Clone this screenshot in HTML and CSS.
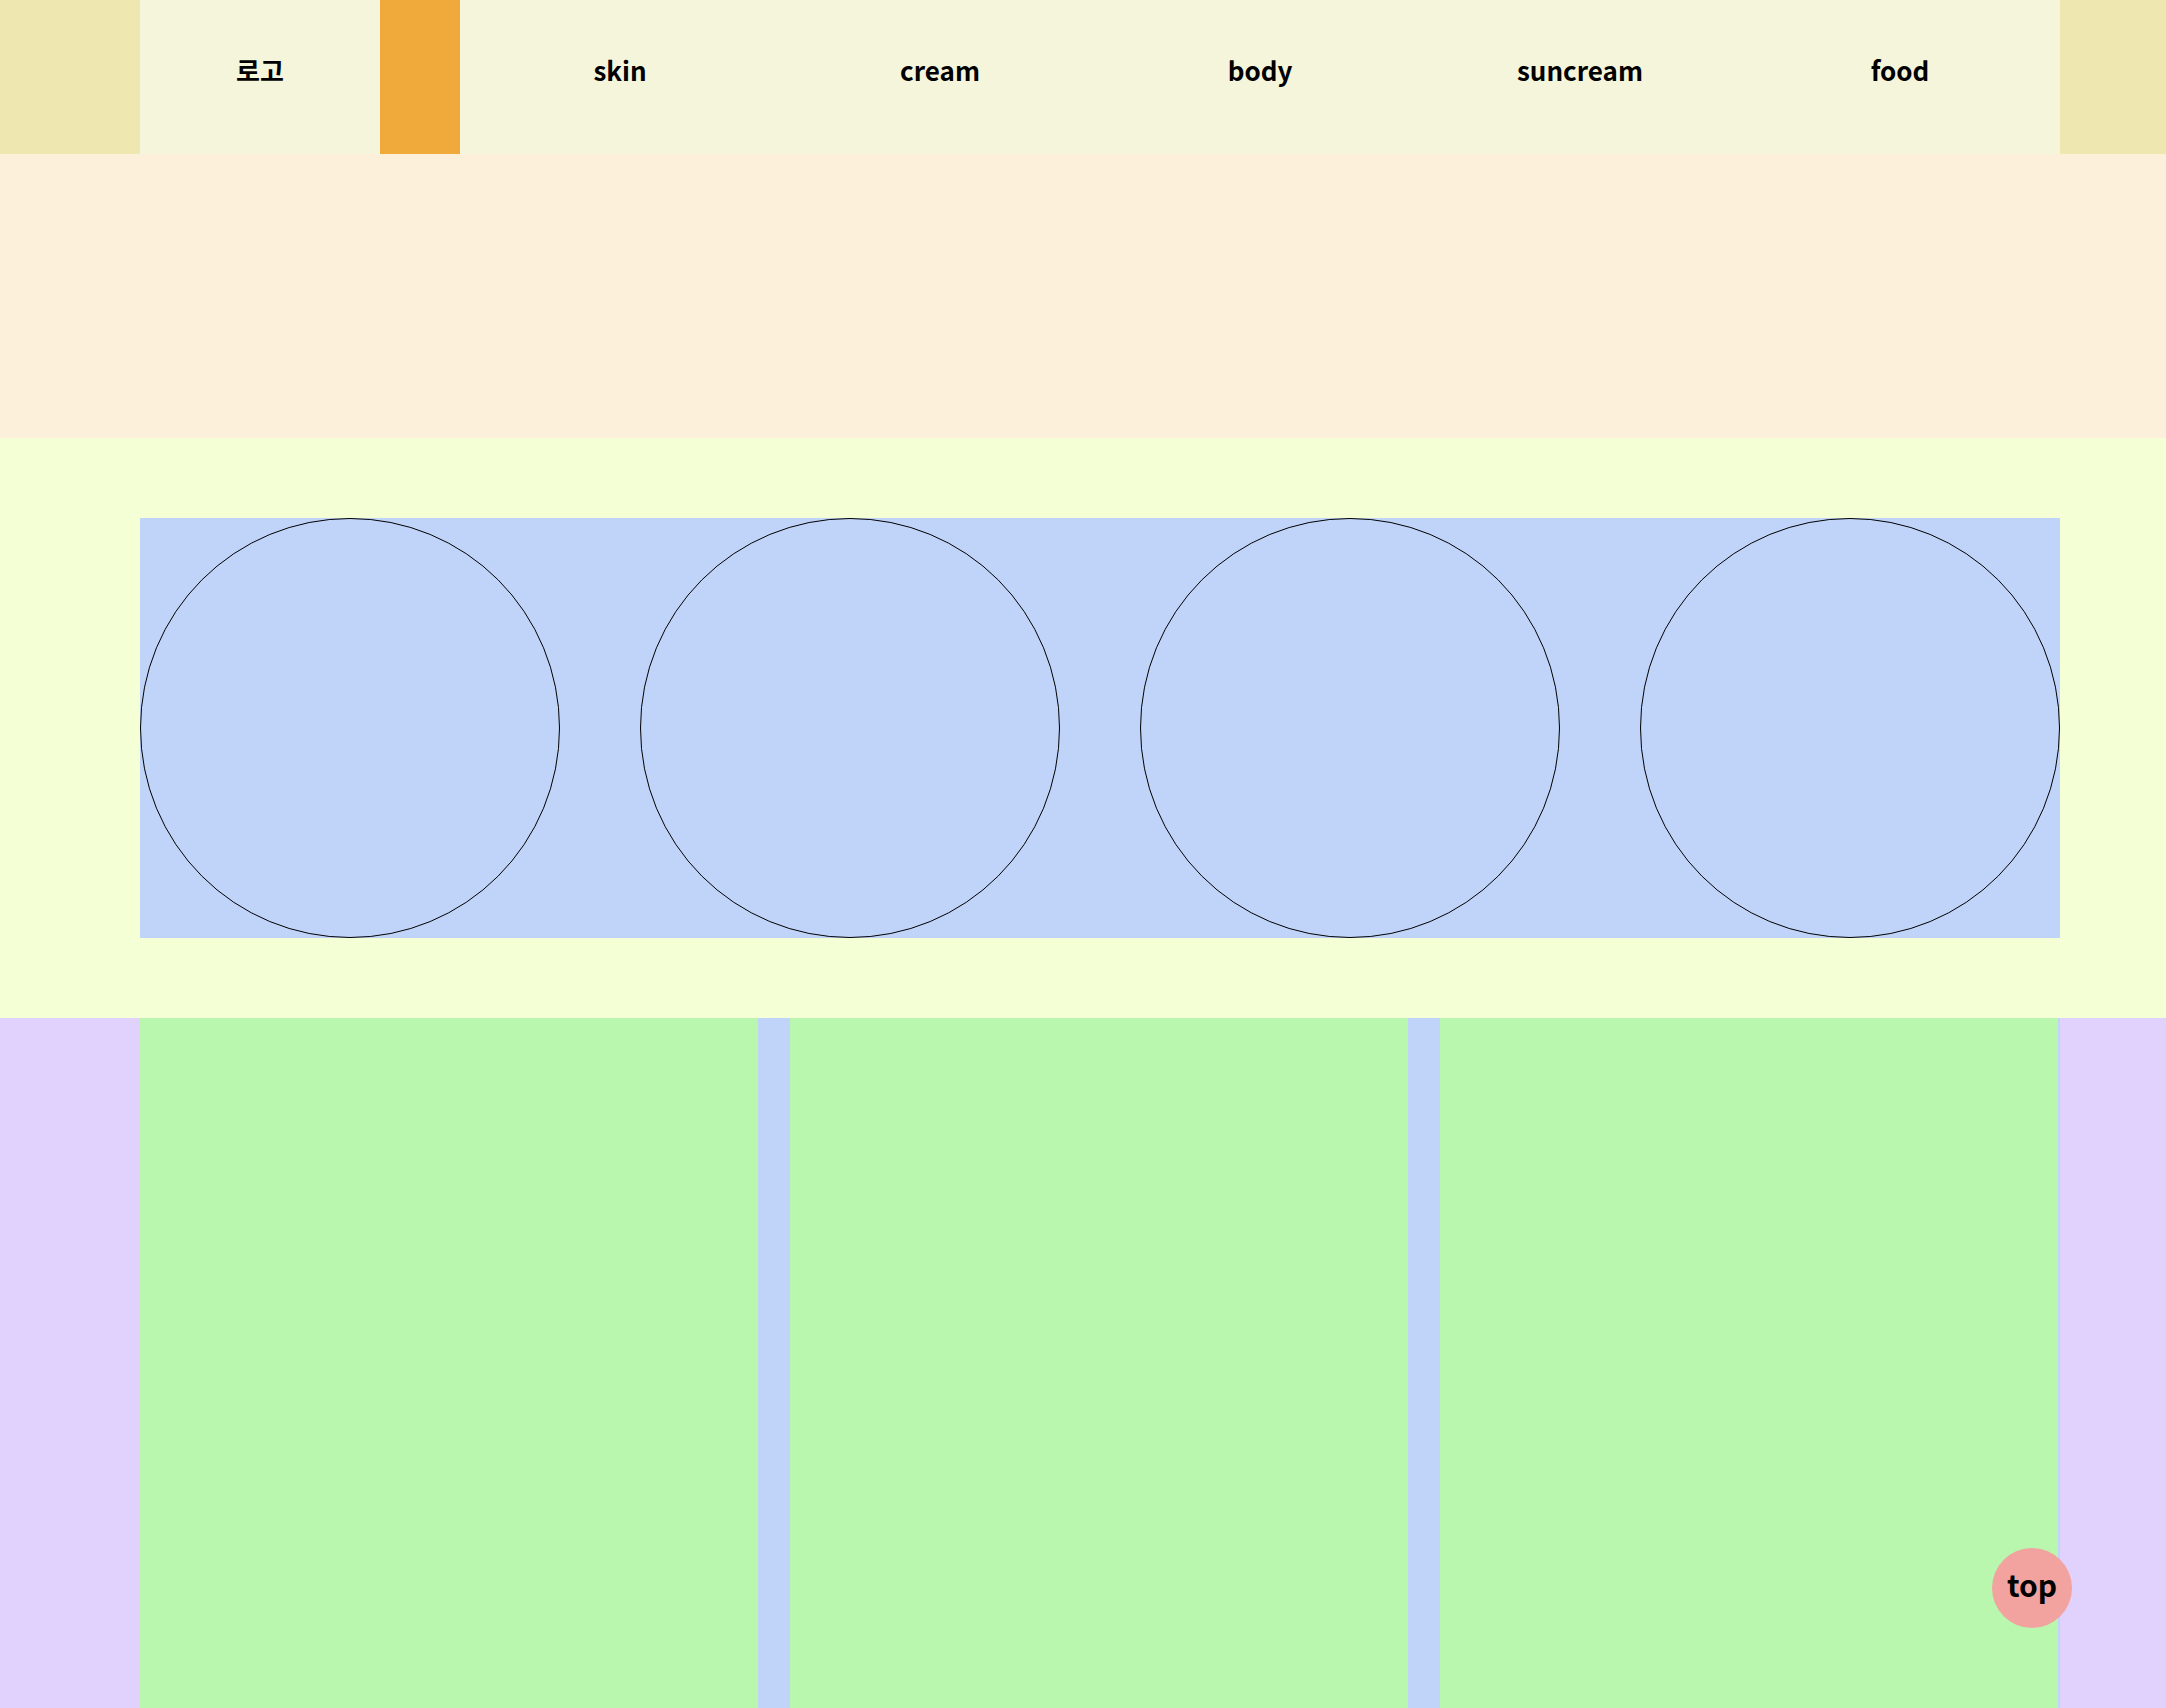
FILE: index.html
```html
<!DOCTYPE html>
<html lang="ko">
<head>
<meta charset="utf-8">
<title>page</title>
<link rel="stylesheet" href="styles.css">
</head>
<body>
<header class="top-bar">
  <div class="top-inner">
    <div class="logo">로고</div>
    <div class="accent"></div>
    <nav class="menu">
      <a class="menu-item" href="#">skin</a>
      <a class="menu-item" href="#">cream</a>
      <a class="menu-item" href="#">body</a>
      <a class="menu-item" href="#">suncream</a>
      <a class="menu-item" href="#">food</a>
    </nav>
  </div>
</header>
<section class="banner"></section>
<section class="circles">
  <div class="circle-row">
    <div class="circle"></div>
    <div class="circle"></div>
    <div class="circle"></div>
    <div class="circle"></div>
  </div>
</section>
<section class="cards">
  <div class="card-grid">
    <div class="card"></div>
    <div class="card"></div>
    <div class="card"></div>
  </div>
</section>
<a class="to-top" href="#">top</a>
</body>
</html>
```
FILE: styles.css
```css
* { box-sizing: border-box; }
html, body { margin: 0; padding: 0; }
body {
  font-family: "Noto Sans CJK KR", "Noto Sans", sans-serif;
  color: #000;
  overflow: hidden;
}
.top-bar {
  background: #eee8b0;
  height: 154px;
}
.top-inner {
  width: 1920px;
  height: 100%;
  margin-left: 140px;
  display: flex;
  background: #f5f5dc;
}
.logo {
  width: 240px;
  display: flex;
  align-items: center;
  justify-content: center;
  font-size: 26px;
  font-weight: 700;
  padding-bottom: 16px;
}
.accent {
  width: 80px;
  background: #f0aa3c;
}
.menu {
  flex: 1;
  display: flex;
}
.menu-item {
  flex: 1;
  display: flex;
  align-items: center;
  justify-content: center;
  font-size: 26px;
  font-weight: 700;
  color: #000;
  text-decoration: none;
  padding-bottom: 16px;
}
.banner {
  height: 284px;
  background: #fcf0da;
}
.circles {
  background: #f5ffd6;
  padding: 80px 0;
}
.circle-row {
  width: 1920px;
  margin-left: 140px;
  display: flex;
  justify-content: space-between;
  background: #c0d4fa;
}
.circle {
  width: 420px;
  height: 420px;
  border: 1px solid #000;
  border-radius: 50%;
}
.cards {
  background: #e1d1fd;
}
.card-grid {
  width: 1920px;
  margin-left: 140px;
  display: grid;
  grid-template-columns: repeat(3, 618px);
  column-gap: 32px;
  background: #c0d4fa;
  height: 690px;
}
.card {
  background: #baf7ae;
}
.to-top {
  position: fixed;
  right: 94px;
  bottom: 80px;
  width: 80px;
  height: 80px;
  border-radius: 50%;
  background: #f2a3a0;
  display: flex;
  align-items: center;
  justify-content: center;
  font-size: 30px;
  font-weight: 700;
  color: #000;
  text-decoration: none;
  padding-bottom: 8px;
}
```
